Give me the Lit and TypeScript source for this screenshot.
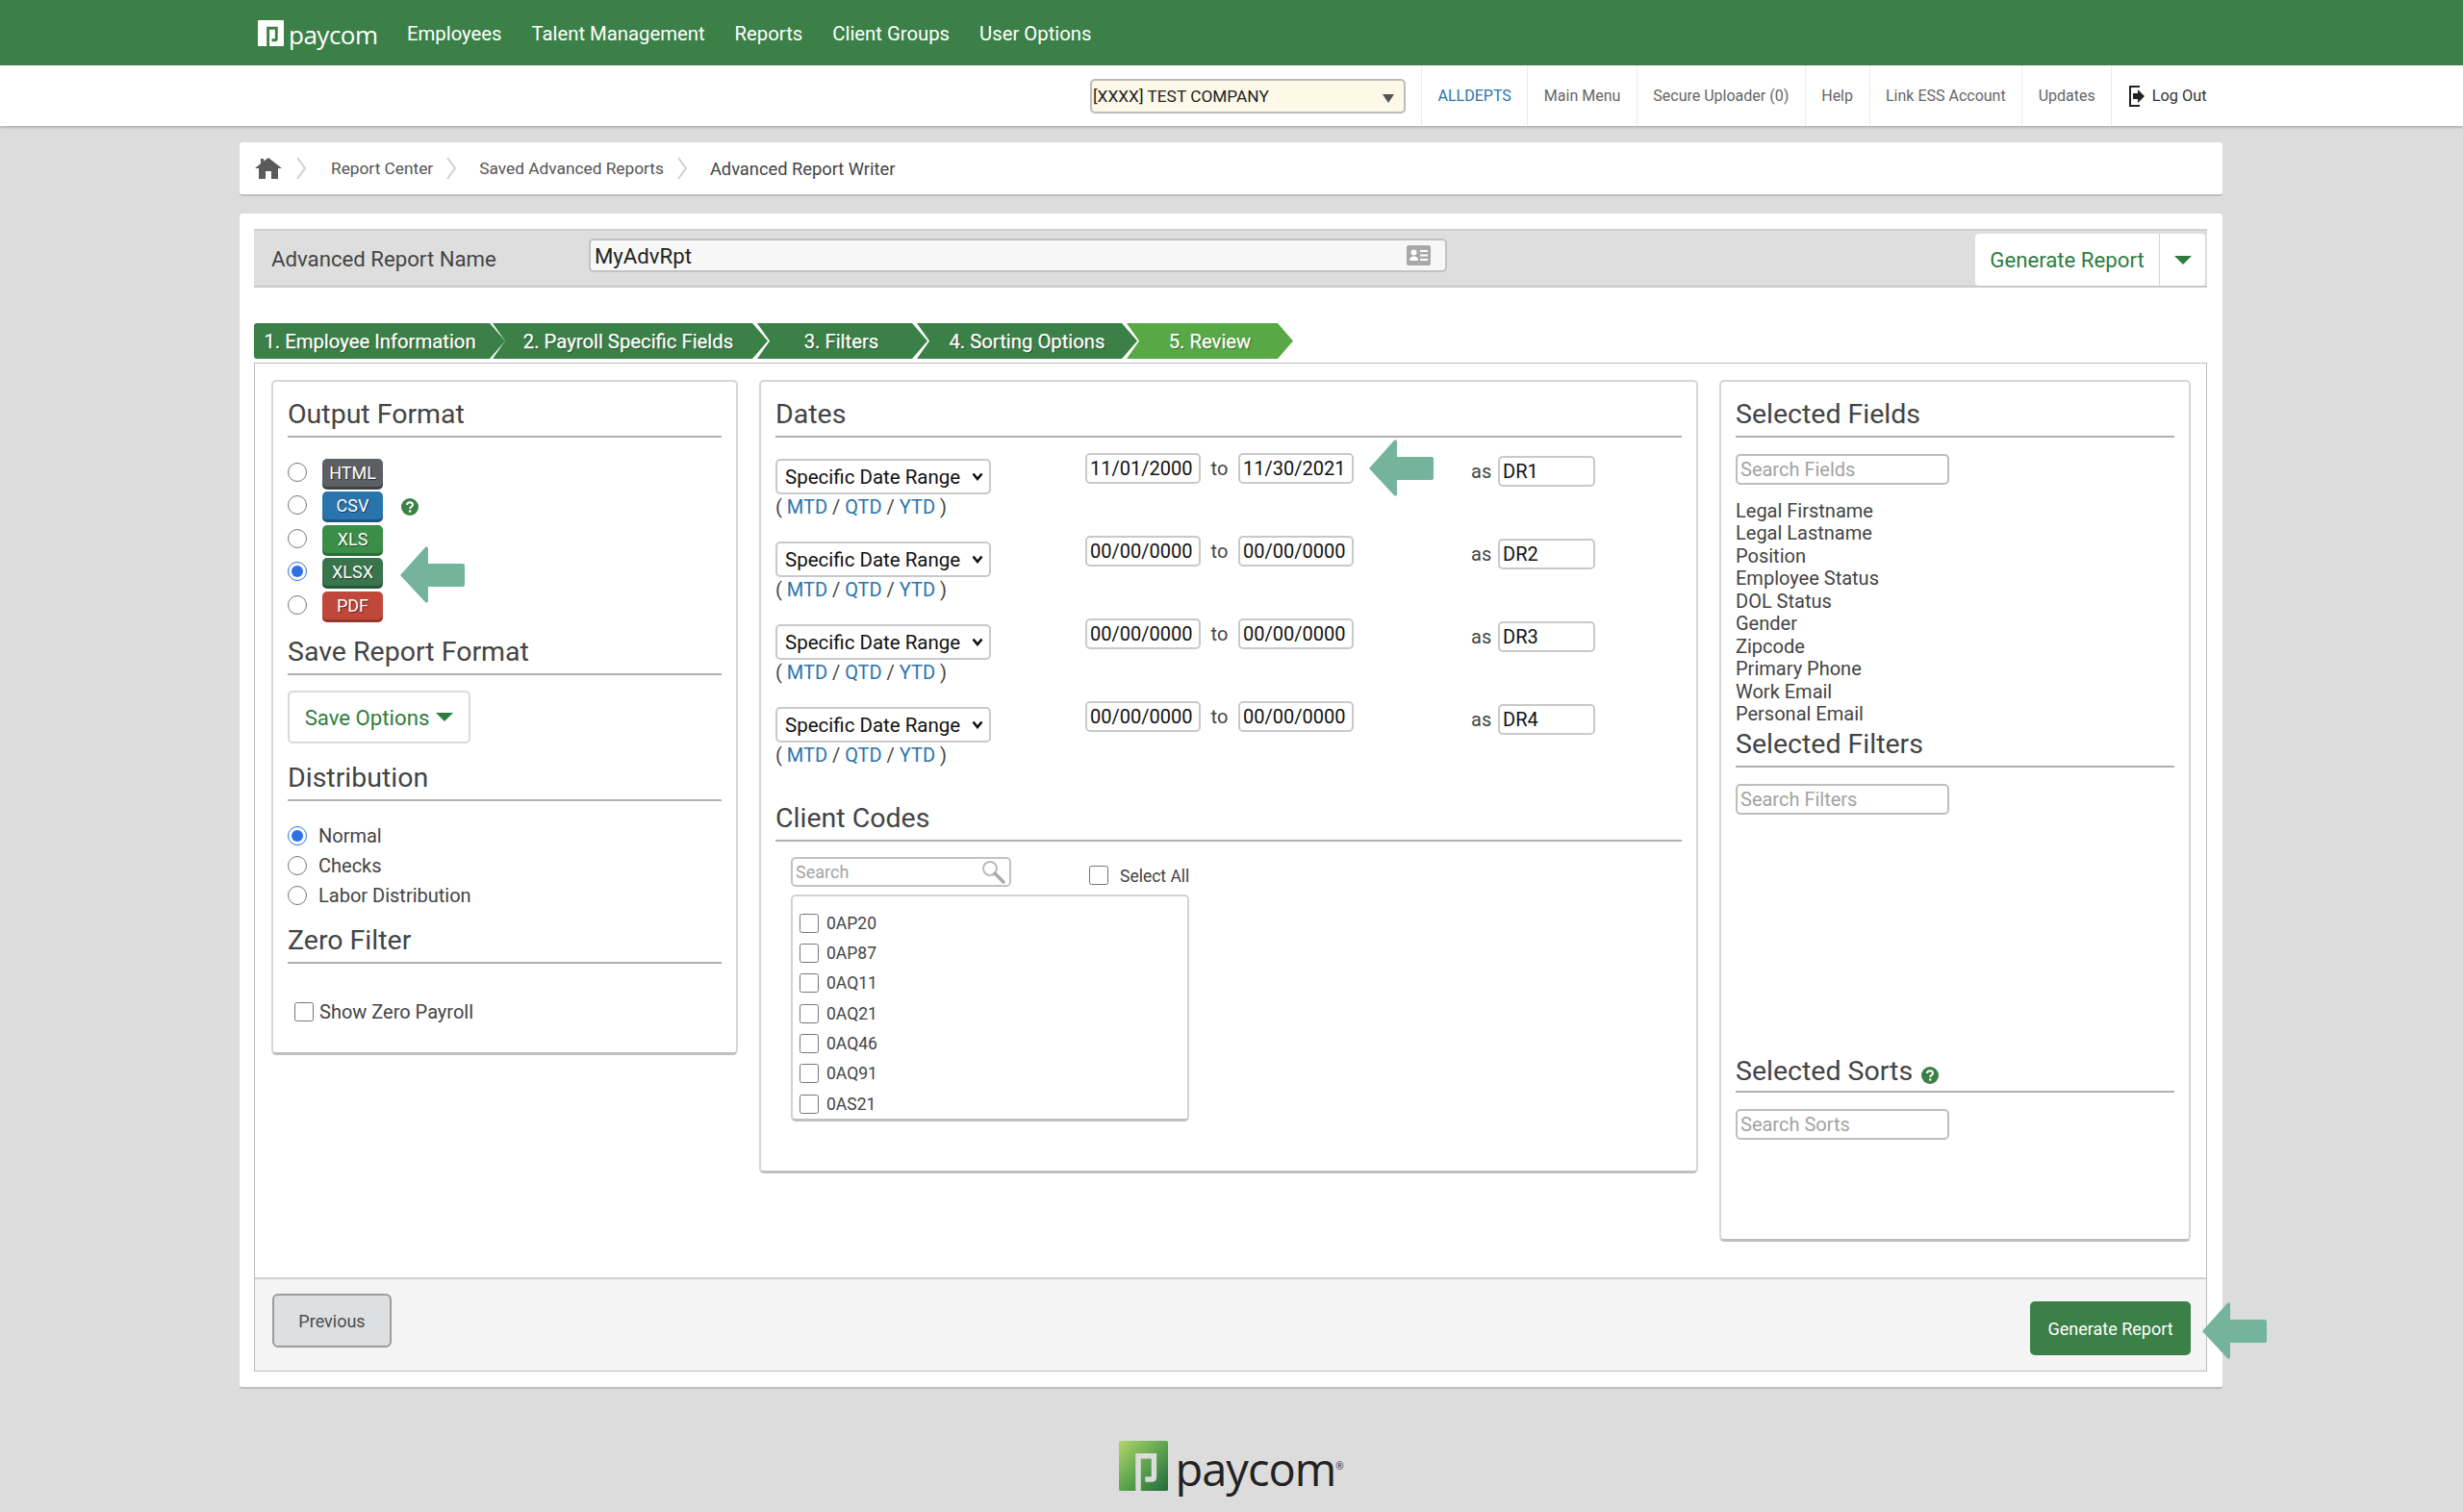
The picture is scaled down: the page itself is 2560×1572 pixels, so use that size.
import { LitElement, html, css, svg } from 'lit';
import { customElement } from 'lit/decorators.js';

const NAV = ['Employees', 'Talent Management', 'Reports', 'Client Groups', 'User Options'];
const SUBNAV = ['Main Menu', 'Secure Uploader (0)', 'Help', 'Link ESS Account', 'Updates'];
const STEPS = ['1. Employee Information', '2. Payroll Specific Fields', '3. Filters', '4. Sorting Options', '5. Review'];
const FORMATS = [
  { label: 'HTML', cls: 'html' },
  { label: 'CSV', cls: 'csv', help: true },
  { label: 'XLS', cls: 'xls' },
  { label: 'XLSX', cls: 'xlsx', checked: true },
  { label: 'PDF', cls: 'pdf' },
];
const DATES = [
  { from: '11/01/2000', to: '11/30/2021', as: 'DR1', arrow: true },
  { from: '00/00/0000', to: '00/00/0000', as: 'DR2' },
  { from: '00/00/0000', to: '00/00/0000', as: 'DR3' },
  { from: '00/00/0000', to: '00/00/0000', as: 'DR4' },
];
const CODES = ['0AP20', '0AP87', '0AQ11', '0AQ21', '0AQ46', '0AQ91', '0AS21'];
const FIELDS = [
  'Legal Firstname', 'Legal Lastname', 'Position', 'Employee Status', 'DOL Status',
  'Gender', 'Zipcode', 'Primary Phone', 'Work Email', 'Personal Email',
];

const arrow = (cls: string) => html`<svg class="arrow ${cls}" viewBox="0 0 68 61">
  <path d="M1 31 L27 2 Q29 0 30 3 L30 19 L66 19 Q68 19 68 21 L68 41 Q68 43 66 43 L30 43 L30 58 Q29 61 27 59 Z" fill="#74b49c"/>
</svg>`;

const mark = (fill: string, cut: string) => svg`
  <rect width="28" height="28" rx="1" fill=${fill}/>
  <path d="M11 28 V8.5 H20 V20 Q20 21.5 18.500 21.500 H15" fill="none" stroke=${cut} stroke-width="3"/>`;

const help = html`<svg class="help" viewBox="0 0 18 18">
  <circle cx="9" cy="9" r="9" fill="#3b8047"/>
  <path d="M6 7 Q6 4.200 9 4.200 Q12 4.200 12 6.800 Q12 8.300 10.300 9.200 Q9.200 9.800 9.200 11" fill="none" stroke="#fff" stroke-width="2"/>
  <rect x="8" y="12.300" width="2.300" height="2.300" fill="#fff"/>
</svg>`;

const crumbChevron = html`<svg class="chev" viewBox="0 0 10 24"><path d="M1 1 L9 12 L1 23" fill="none" stroke="#cfcfcf" stroke-width="2"/></svg>`;

@customElement('app-root')
export class AppRoot extends LitElement {
  static styles = css`
    :host {
      display: block;
      width: 2560px;
      height: 1572px;
      overflow: hidden;
      background: #dcdcdc;
      font-family: Roboto, 'Liberation Sans', sans-serif;
      color: #444;
    }
    * { box-sizing: border-box; }

    .topnav {
      height: 68px;
      background: #3b8047;
      display: flex;
      align-items: center;
      padding-left: 268px;
      color: #fff;
      font-size: 20.300px;
    }
    .toplogo { display: flex; align-items: center; gap: 5px; width: 155px; }
    .toplogo svg { width: 27px; height: 27px; }
    .toplogo span { font-family: 'Open Sans', sans-serif; font-size: 26px; line-height: 27px; letter-spacing: -0.5px; padding-top: 4px; }
    .toplinks { display: flex; gap: 31px; padding-top: 1px; }

    .subbar {
      height: 63px;
      background: #fff;
      display: flex;
      align-items: stretch;
      justify-content: flex-end;
      padding-right: 250px;
      box-shadow: 0 2px 2px #b5b5b5;
      font-size: 16px;
      color: #666;
    }
    .company {
      align-self: center;
      margin-right: 16px;
      width: 328px;
      height: 36px;
      padding-left: 1px;
      display: flex;
      align-items: center;
      justify-content: space-between;
      background: #fdf8e8;
      border: 2px solid #bbb;
      border-radius: 5px;
      color: #222;
      font-size: 17.300px;
    }
    .company i { width: 0; height: 0; margin: 5px 10px 0 0; border: 6px solid transparent; border-top: 9px solid #555; border-bottom: 0; }
    .subitem { display: flex; align-items: center; padding: 0 16.500px; border-left: 1px solid #ececec; gap: 7px; }
    .subitem.blue { color: #2a74ad; }
    .subitem.logout { color: #333; font-size: 16.300px; }
    .subitem svg { width: 18px; height: 22px; }

    .crumbs {
      margin: 17px 250px 0 249px;
      height: 56px;
      background: #fff;
      border-radius: 3px;
      border-bottom: 2px solid #bdbdbd;
      display: flex;
      align-items: center;
      padding-left: 16px;
      font-size: 17.300px;
      color: #555;
    }
    .crumbs .home { width: 28px; height: 22px; }
    .crumbs .chev { width: 10px; height: 24px; margin: 0 24px 0 14px; }
    .crumbs .chev.first { margin: 0 26px 0 15px; }
    .crumbs .here { font-size: 18.300px; color: #444; padding-top: 1px; }

    .main {
      position: relative;
      margin: 18px 250px 0 249px;
      height: 1222px;
      padding: 16px 16px 0 15px;
      background: #fff;
      border-radius: 3px;
      border-bottom: 2px solid #bdbdbd;
    }
    .namebar {
      height: 61px;
      background: #dedede;
      border-bottom: 2px solid #c9c9c9;
      border-top: 2px solid #d2d2d2;
      display: flex;
      align-items: flex-start;
      padding: 3px 2px 0 18px;
      font-size: 22.200px;
    }
    .namebar label { width: 330px; padding-top: 13px; }
    .nameinput {
      width: 892px;
      height: 35px;
      margin-top: 5px;
      padding: 0 15px 0 4px;
      background: #f7f7f7;
      border: 2px solid #c2c2c2;
      border-radius: 5px;
      display: flex;
      align-items: center;
      justify-content: space-between;
    }
    .nameinput input { flex: 1; border: 0; background: none; outline: 0; padding: 0; font: inherit; color: #222; }
    .nameinput svg { width: 25px; height: 21px; }
    .genbtn {
      margin-left: auto;
      width: 239px;
      height: 54px;
      background: #fff;
      border-radius: 4px;
      display: flex;
      align-items: stretch;
      color: #2e7d3e;
    }
    .genbtn span { width: 192px; display: flex; align-items: center; justify-content: center; border-right: 1px solid #d5d5d5; }
    .genbtn b { flex: 1; display: flex; align-items: center; justify-content: center; }
    .caret { display: block; width: 0; height: 0; border: 9px solid transparent; border-top: 9px solid #2e7d3e; border-bottom: 0; }

    .steps { display: flex; margin-top: 37px; height: 37px; }
    .step {
      height: 37px;
      display: flex;
      align-items: center;
      justify-content: center;
      margin-left: -13px;
      background: #3b8047;
      color: #fff;
      font-size: 20.300px;
      padding-top: 1px;
      -webkit-text-stroke: 0.25px #fff;
      text-shadow: 1px 1px 1px rgba(0, 0, 0, 0.45);
      clip-path: polygon(0 0, calc(100% - 16px) 0, 100% 50%, calc(100% - 16px) 100%, 0 100%, 13px 50%);
    }
    .step:nth-child(1) { width: 261px; margin-left: 0; padding-right: 20px; clip-path: polygon(0 0, calc(100% - 16px) 0, 100% 50%, calc(100% - 16px) 100%, 0 100%); border-radius: 3px 0 0 3px; }
    .step:nth-child(2) { width: 286px; padding-right: 4px; }
    .step:nth-child(3) { width: 177px; margin-left: -11px; padding-right: 2px; }
    .step:nth-child(4) { width: 229px; margin-left: -11px; }
    .step:nth-child(5) { width: 173px; margin-left: -11px; background: #58a845; }

    .content {
      margin-top: 4px;
      border: 1.500px solid #bdbdbd;
      height: 1049px;
      display: flex;
      flex-direction: column;
    }
    .columns { flex: 1; display: flex; align-items: flex-start; gap: 22px; padding: 17px 16px 0 17px; }
    .panel {
      background: #fff;
      border: 2px solid #d6d6d6;
      border-bottom: 3px solid #bfbfbf;
      border-radius: 5px;
      padding: 16px 15px 0;
    }
    .panel.left { width: 485px; height: 702px; }
    .panel.mid { width: 976px; height: 825px; }
    .panel.right { width: 490px; height: 896px; }

    h3 {
      margin: 0;
      font-size: 28.500px;
      font-weight: 400;
      line-height: 34px;
      padding: 1px 0 5px;
      border-bottom: 2px solid #b0b0b0;
      color: #444;
      white-space: nowrap;
    }
    h3 .help { width: 18px; height: 18px; margin-left: 2px; vertical-align: -4px; }
    .help { width: 18px; height: 18px; }

    input[type='radio'], input[type='checkbox'] { width: 20px; height: 20px; margin: 0; flex: none; accent-color: #2f6fe8; }

    .formats { margin-top: 20px; position: relative; }
    .fmt { height: 34.500px; display: flex; align-items: center; gap: 16px; }
    .fmt input { margin-top: -3px; }
    .badge {
      width: 63px;
      height: 29px;
      margin-top: -2px;
      border-radius: 5px;
      color: #fff;
      font-size: 18px;
      display: flex;
      align-items: center;
      justify-content: center;
      text-shadow: 1px 1px 1px rgba(0, 0, 0, 0.5);
    }
    .badge.html { background: #5c5f64; box-shadow: 0 3px 0 #3f4144; }
    .badge.csv { background: #2a74ad; box-shadow: 0 3px 0 #1d5683; }
    .badge.xls { background: #3b8e47; box-shadow: 0 3px 0 #2a6d35; }
    .badge.xlsx { background: #39744c; box-shadow: 0 3px 0 #285638; }
    .badge.pdf { background: #c0483a; box-shadow: 0 3px 0 #96352a; }
    .fmt .help { margin-left: 3px; }

    .saveh { margin-top: 12.500px; }
    .savebtn {
      margin-top: 16px;
      width: 190px;
      height: 55px;
      border: 2px solid #dadada;
      border-radius: 5px;
      display: flex;
      align-items: center;
      justify-content: center;
      gap: 7px;
      color: #2e7d3e;
      font-size: 22.200px;
    }
    .distrh { margin-top: 18px; }
    .distr { margin-top: 20px; display: grid; grid-auto-rows: 31px; font-size: 20px; }
    .distr label { display: flex; align-items: center; gap: 12px; }
    .zeroh { margin-top: 14px; }
    .zero { margin: 40px 0 0 7px; display: flex; align-items: center; gap: 6px; font-size: 20px; height: 20px; }

    .daterows { margin-top: 16px; }
    .daterow { position: relative; height: 86px; display: flex; align-items: flex-start; }
    .range { width: 322px; padding-top: 6px; }
    .selectwrap { position: relative; width: 224px; height: 37px; }
    .selectwrap select {
      appearance: none;
      display: block;
      width: 100%;
      height: 100%;
      padding: 1px 0 0 8px;
      background: #fff;
      border: 2px solid #c9c9c9;
      border-radius: 5px;
      font: inherit;
      font-size: 20.500px;
      color: #111;
    }
    .selectwrap svg { position: absolute; right: 8px; top: 14px; width: 12px; height: 9px; pointer-events: none; }
    .quick { line-height: 24px; font-size: 20px; margin-top: 1px; color: #444; }
    .quick a { color: #2a74ad; }
    .dateinput {
      height: 32px;
      width: 120px;
      padding: 0 3px;
      background: #fff;
      border: 2px solid #c9c9c9;
      border-radius: 5px;
      font: inherit;
      font-size: 20px;
      color: #111;
      outline: 0;
    }
    .daterow .to { width: 39px; text-align: center; line-height: 32px; font-size: 20px; }
    .daterow .as { margin-left: 122px; line-height: 38px; width: 28px; font-size: 20px; }
    .daterow .dateinput.alias { width: 101px; margin-top: 3px; }
    .arrow { position: absolute; width: 68px; height: 61px; pointer-events: none; }
    .arrow.a-date { left: 616px; top: -15px; }
    .arrow.a-fmt { left: 116px; top: 92px; }
    .arrow.a-gen { right: -79px; top: 0; }

    .codesh { margin-top: 17.500px; }
    .codesearch { margin: 16px 0 0 16px; display: flex; align-items: flex-start; }
    .searchbox {
      width: 229px;
      height: 31px;
      border: 2px solid #c2c2c2;
      border-radius: 5px;
      padding: 0 4px 0 3px;
      display: flex;
      align-items: center;
      justify-content: space-between;
      font-size: 18px;
      color: #a3a3a3;
    }
    .searchbox svg { width: 26px; height: 26px; }
    .selectall { margin: 9px 0 0 81px; display: flex; align-items: center; gap: 12px; font-size: 17.500px; height: 20px; }
    .selectall span { padding-top: 2px; }
    .codes {
      margin: 8px 0 0 16px;
      width: 414px;
      height: 236px;
      border: 2px solid #d2d2d2;
      border-bottom: 3px solid #bfbfbf;
      border-radius: 5px;
      padding: 12.500px 0 0 7px;
      overflow: hidden;
      font-size: 17.500px;
    }
    .codes label { height: 31.330px; display: flex; align-items: center; gap: 8px; }

    .fieldsearch {
      display: block;
      margin-top: 17px;
      width: 222px;
      height: 32px;
      border: 2px solid #bdbdbd;
      border-radius: 5px;
      padding: 0 3px;
      font: inherit;
      font-size: 20px;
      outline: 0;
      background: #fff;
    }
    .fieldsearch::placeholder { color: #a3a3a3; opacity: 1; }
    .fields { margin-top: 16px; font-size: 20px; line-height: 23.450px; }
    .filtersh { margin-top: 1px; }
    .sortsh { margin-top: 249px; padding-bottom: 3px; }

    .footer {
      position: relative;
      height: 97px;
      background: #f4f4f4;
      border-top: 2px solid #d0d0d0;
      display: flex;
      align-items: flex-start;
      justify-content: space-between;
      padding: 15px 16px 0 18px;
    }
    .prev {
      width: 124px;
      height: 56px;
      background: #dce0e3;
      border: 2px solid #9c9c9c;
      border-radius: 6px;
      display: flex;
      align-items: center;
      justify-content: center;
      font-size: 18px;
      color: #4c4c4c;
    }
    .finish { position: relative; margin-top: 8px; }
    .greenbtn {
      width: 167px;
      height: 56px;
      background: #3b8047;
      border-radius: 5px;
      display: flex;
      align-items: center;
      justify-content: center;
      font-size: 18px;
      color: #fff;
    }
    .footlogo {
      margin: 54px auto 0;
      width: 235px;
      display: flex;
      align-items: flex-end;
      gap: 8px;
      color: #222;
    }
    .footlogo svg { width: 51px; height: 52px; }
    .footlogo span { font-family: 'Open Sans', sans-serif; font-size: 47px; line-height: 46px; letter-spacing: -1px; }
    .footlogo sup { font-size: 10px; line-height: 0; }
  `;

  private radio(name: string, checked = false) {
    return html`<input type="radio" name=${name} ?checked=${checked} />`;
  }

  private dateRow(d: (typeof DATES)[number]) {
    return html`
      <div class="daterow">
        <div class="range">
          <div class="selectwrap">
            <select><option>Specific Date Range</option></select>
            <svg viewBox="0 0 12 9"><path d="M1.500 1.500 L6 7 L10.500 1.500" fill="none" stroke="#111" stroke-width="2.600"/></svg>
          </div>
          <div class="quick">( <a>MTD</a> / <a>QTD</a> / <a>YTD</a> )</div>
        </div>
        <input class="dateinput" .value=${d.from} />
        <span class="to">to</span>
        <input class="dateinput" .value=${d.to} />
        <span class="as">as</span>
        <input class="dateinput alias" .value=${d.as} />
        ${d.arrow ? arrow('a-date') : ''}
      </div>
    `;
  }

  render() {
    return html`
      <div class="topnav">
        <div class="toplogo">
          <svg viewBox="0 0 28 28">${mark('#fff', '#3b8047')}</svg>
          <span>paycom</span>
        </div>
        <div class="toplinks">${NAV.map((n) => html`<span>${n}</span>`)}</div>
      </div>

      <div class="subbar">
        <div class="company"><span>[XXXX] TEST COMPANY</span><i></i></div>
        <div class="subitem blue">ALLDEPTS</div>
        ${SUBNAV.map((n) => html`<div class="subitem">${n}</div>`)}
        <div class="subitem logout">
          <svg viewBox="0 0 18 22">
            <path d="M12 1 H2 V21 H12" fill="none" stroke="#222" stroke-width="2"/>
            <path d="M5 8 H10 V4 L17 11 L10 18 V14 H5 Z" fill="#222"/>
          </svg>
          Log Out
        </div>
      </div>

      <div class="crumbs">
        <svg class="home" viewBox="0 0 28 22">
          <path d="M14 0 L28 11 H24 V22 H17 V14 H11 V22 H4 V11 H0 L6 6 V1 H9 V3.500 Z" fill="#5a5a5a"/>
        </svg>
        <svg class="chev first" viewBox="0 0 10 24"><path d="M1 1 L9 12 L1 23" fill="none" stroke="#cfcfcf" stroke-width="2"/></svg>
        <span>Report Center</span>
        ${crumbChevron}
        <span>Saved Advanced Reports</span>
        ${crumbChevron}
        <span class="here">Advanced Report Writer</span>
      </div>

      <div class="main">
        <div class="namebar">
          <label>Advanced Report Name</label>
          <div class="nameinput">
            <input .value=${'MyAdvRpt'} />
            <svg viewBox="0 0 25 21">
              <rect width="25" height="21" rx="2" fill="#a8a8a8"/>
              <circle cx="7.500" cy="7.500" r="3" fill="#fff"/>
              <path d="M3 16 Q3 11.500 7.500 11.500 Q12 11.500 12 16 Z" fill="#fff"/>
              <rect x="14" y="5" width="8" height="2" fill="#fff"/>
              <rect x="14" y="9.500" width="8" height="2" fill="#fff"/>
              <rect x="14" y="14" width="8" height="2" fill="#fff"/>
            </svg>
          </div>
          <div class="genbtn"><span>Generate Report</span><b><i class="caret"></i></b></div>
        </div>

        <div class="steps">${STEPS.map((s) => html`<div class="step">${s}</div>`)}</div>

        <div class="content">
          <div class="columns">
            <section class="panel left">
              <h3>Output Format</h3>
              <div class="formats">
                ${FORMATS.map(
                  (f) => html`<div class="fmt">
                    ${this.radio('format', f.checked)}
                    <span class="badge ${f.cls}">${f.label}</span>
                    ${f.help ? help : ''}
                  </div>`
                )}
                ${arrow('a-fmt')}
              </div>
              <h3 class="saveh">Save Report Format</h3>
              <div class="savebtn">Save Options <i class="caret"></i></div>
              <h3 class="distrh">Distribution</h3>
              <div class="distr">
                <label>${this.radio('distr', true)} Normal</label>
                <label>${this.radio('distr')} Checks</label>
                <label>${this.radio('distr')} Labor Distribution</label>
              </div>
              <h3 class="zeroh">Zero Filter</h3>
              <label class="zero"><input type="checkbox" /> Show Zero Payroll</label>
            </section>

            <section class="panel mid">
              <h3>Dates</h3>
              <div class="daterows">${DATES.map((d) => this.dateRow(d))}</div>
              <h3 class="codesh">Client Codes</h3>
              <div class="codesearch">
                <div class="searchbox">
                  <span>Search</span>
                  <svg viewBox="0 0 26 26">
                    <circle cx="10" cy="10" r="7" fill="none" stroke="#bbb" stroke-width="2"/>
                    <path d="M15 15 L24 24" stroke="#aaa" stroke-width="3.500" stroke-linecap="round"/>
                  </svg>
                </div>
                <label class="selectall"><input type="checkbox" /><span>Select All</span></label>
              </div>
              <div class="codes">
                ${CODES.map((c) => html`<label><input type="checkbox" /> ${c}</label>`)}
              </div>
            </section>

            <section class="panel right">
              <h3>Selected Fields</h3>
              <input class="fieldsearch" placeholder="Search Fields" />
              <div class="fields">${FIELDS.map((f) => html`<div>${f}</div>`)}</div>
              <h3 class="filtersh">Selected Filters</h3>
              <input class="fieldsearch" placeholder="Search Filters" />
              <h3 class="sortsh">Selected Sorts ${help}</h3>
              <input class="fieldsearch" placeholder="Search Sorts" />
            </section>
          </div>

          <div class="footer">
            <div class="prev">Previous</div>
            <div class="finish">
              <div class="greenbtn">Generate Report</div>
              ${arrow('a-gen')}
            </div>
          </div>
        </div>
      </div>

      <div class="footlogo">
        <svg viewBox="0 0 28 28" preserveAspectRatio="none">
          <defs>
            <linearGradient id="lg" x1="0" y1="0" x2="1" y2="1">
              <stop offset="0" stop-color="#b5d56a"/>
              <stop offset="0.5" stop-color="#5fa54e"/>
              <stop offset="1" stop-color="#23693f"/>
            </linearGradient>
          </defs>
          ${mark('url(#lg)', '#dcdcdc')}
        </svg>
        <span>paycom<sup>®</sup></span>
      </div>
    `;
  }
}
